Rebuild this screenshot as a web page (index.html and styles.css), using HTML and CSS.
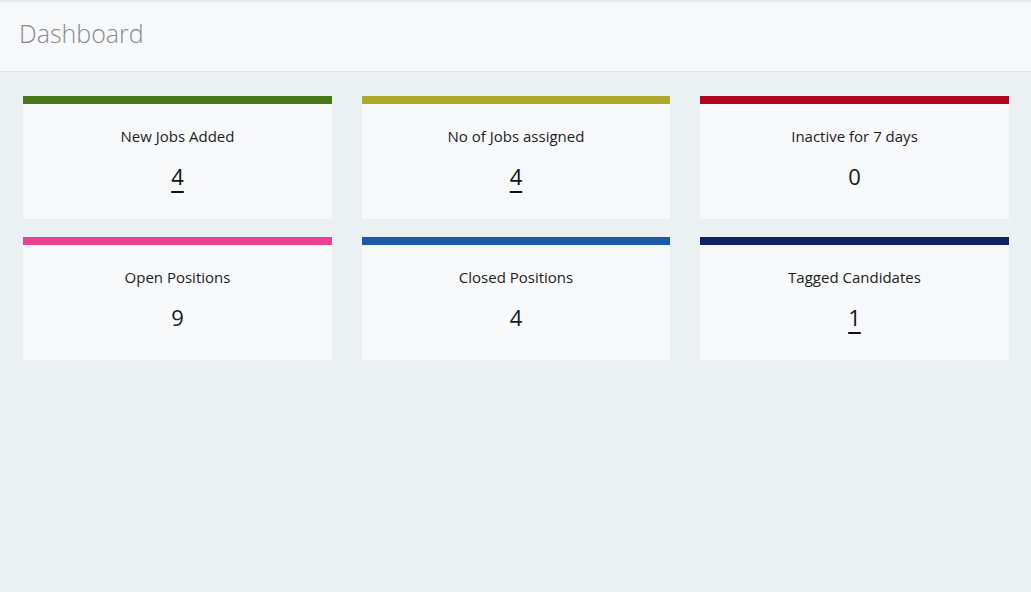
FILE: index.html
```html
<!DOCTYPE html>
<html>
<head>
<meta charset="utf-8">
<link rel="stylesheet" href="styles.css">
</head>
<body>
<header class="topbar">
  <h1 class="title">Dashboard</h1>
</header>
<main class="grid">
  <div class="card"><div class="bar green"></div><div class="label">New Jobs Added</div><a class="value link" href="#">4</a></div>
  <div class="card"><div class="bar olive"></div><div class="label">No of Jobs assigned</div><a class="value link" href="#">4</a></div>
  <div class="card"><div class="bar red"></div><div class="label">Inactive for 7 days</div><span class="value">0</span></div>
  <div class="card"><div class="bar pink"></div><div class="label">Open Positions</div><span class="value">9</span></div>
  <div class="card"><div class="bar blue"></div><div class="label">Closed Positions</div><span class="value">4</span></div>
  <div class="card"><div class="bar navy"></div><div class="label">Tagged Candidates</div><a class="value link" href="#">1</a></div>
</main>
</body>
</html>
```
FILE: styles.css
```css
html, body {
  margin: 0;
  padding: 0;
  height: 100%;
}
body {
  background: #ebf0f2;
  font-family: "Open Sans", "Noto Sans", sans-serif;
  border-top: 2px solid #e6e9eb;
  box-sizing: border-box;
}
.topbar {
  height: 69px;
  background: #f7f8fa;
  border-bottom: 1px solid #dfe4e6;
  display: flex;
  align-items: center;
  padding-left: 19px;
}
.title {
  margin: 0;
  font-size: 25px;
  font-weight: 300;
  color: #888a8c;
  line-height: 1;
  position: relative;
  top: -3px;
}
.grid {
  display: grid;
  grid-template-columns: 309px 308px 309px;
  column-gap: 30px;
  row-gap: 18px;
  padding: 24px 0 0 23px;
}
.card {
  background: #f7f8fa;
  height: 123px;
  display: flex;
  flex-direction: column;
  align-items: center;
  box-sizing: border-box;
}
.bar {
  height: 8px;
  width: 100%;
  margin-bottom: 21px;
}
.green { background: #487818; }
.olive { background: #b0a82a; }
.red { background: #af061f; }
.pink { background: #e94293; }
.blue { background: #1b59aa; }
.navy { background: #0e2463; }
.label {
  font-size: 15px;
  line-height: 22px;
  color: #1d1d1d;
}
.value {
  margin-top: 14px;
  font-size: 22px;
  line-height: 30px;
  color: #1a1a1a;
  text-decoration: none;
}
.link {
  text-decoration: underline;
  text-decoration-thickness: 2px;
  text-underline-offset: 6px;
  color: #111;
}
```
